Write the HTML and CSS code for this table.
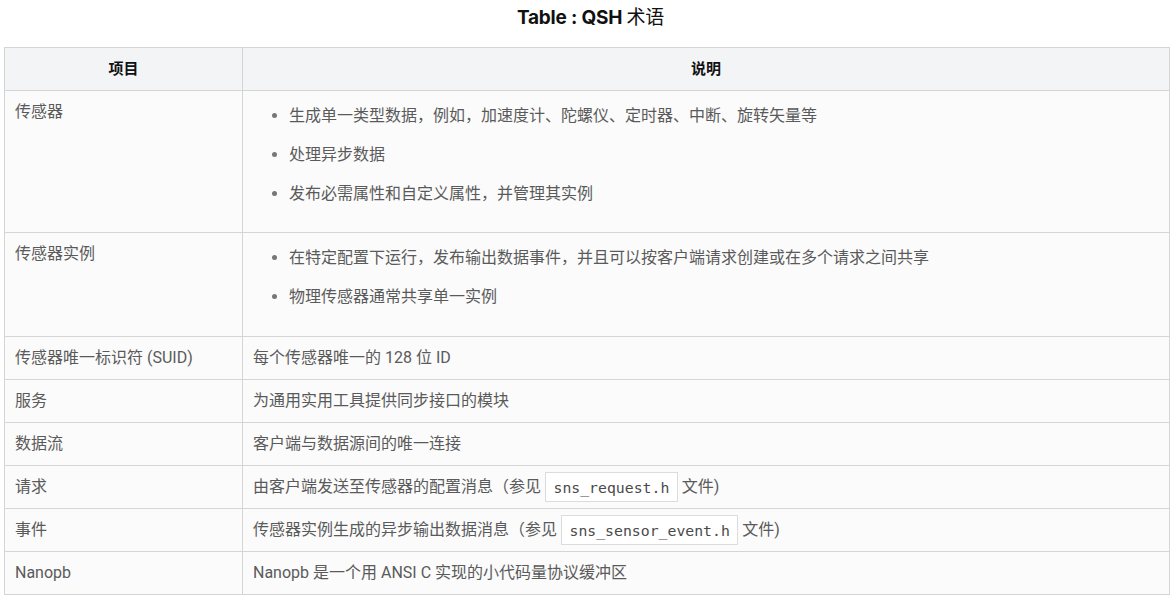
FILE: index.html
```html
<!DOCTYPE html>
<html lang="zh">
<head>
<meta charset="utf-8">
<title>Table : QSH 术语</title>
<link rel="stylesheet" href="styles.css">
</head>
<body>
<div class="title">Table : QSH <span class="title-cjk">术语</span></div>
<table class="terms">
  <colgroup><col class="c1"><col class="c2"></colgroup>
  <thead>
    <tr><th>项目</th><th>说明</th></tr>
  </thead>
  <tbody>
    <tr>
      <td>传感器</td>
      <td>
        <ul class="list">
          <li>生成单一类型数据，例如，加速度计、陀螺仪、定时器、中断、旋转矢量等</li>
          <li>处理异步数据</li>
          <li>发布必需属性和自定义属性，并管理其实例</li>
        </ul>
      </td>
    </tr>
    <tr>
      <td>传感器实例</td>
      <td>
        <ul class="list list-short">
          <li>在特定配置下运行，发布输出数据事件，并且可以按客户端请求创建或在多个请求之间共享</li>
          <li>物理传感器通常共享单一实例</li>
        </ul>
      </td>
    </tr>
    <tr><td>传感器唯一标识符 (SUID)</td><td>每个传感器唯一的 128 位 ID</td></tr>
    <tr><td>服务</td><td>为通用实用工具提供同步接口的模块</td></tr>
    <tr><td>数据流</td><td>客户端与数据源间的唯一连接</td></tr>
    <tr><td>请求</td><td>由客户端发送至传感器的配置消息（参见 <code class="chip">sns_request.h</code> 文件)</td></tr>
    <tr><td>事件</td><td>传感器实例生成的异步输出数据消息（参见 <code class="chip">sns_sensor_event.h</code> 文件)</td></tr>
    <tr><td>Nanopb</td><td>Nanopb 是一个用 ANSI C 实现的小代码量协议缓冲区</td></tr>
  </tbody>
</table>
</body>
</html>
```
FILE: styles.css
```css
html, body {
  margin: 0;
  padding: 0;
  background: #ffffff;
}

body {
  font-family: "Roboto", "Noto Sans CJK SC", sans-serif;
  color: #5a5a5a;
}

.title {
  text-align: center;
  font-family: "Inter", "Noto Sans CJK SC", sans-serif;
  font-weight: 700;
  font-size: 19px;
  line-height: 24px;
  color: #111111;
  padding: 6px 0 17px 8px;
  letter-spacing: -0.2px;
}

.title-cjk {
  font-weight: 400;
}

.terms {
  border-collapse: collapse;
  width: 1166px;
  margin-left: 4px;
  table-layout: fixed;
  background: #fbfbfb;
  font-size: 16px;
  line-height: 22px;
}

.terms .c1 { width: 238px; }

.terms th,
.terms td {
  border: 1px solid #d5d5d5;
  padding: 10px 10px;
  vertical-align: top;
  text-align: left;
}

.terms th {
  background: #f3f4f6;
  color: #111111;
  font-weight: 700;
  font-size: 15px;
  text-align: center;
}

.list {
  margin: 4px 0 17px;
  padding-left: 36px;
}

.list-short {
  margin-bottom: 18px;
}

.list li {
  height: 22px;
}

.list li + li {
  margin-top: 17px;
}

.list li::marker {
  color: #777777;
}

.chip {
  font-family: "DejaVu Sans Mono", "Liberation Mono", monospace;
  font-size: 14.8px;
  color: #4a4a4a;
  background: #ffffff;
  border: 1px solid #dcdcdc;
  padding: 5.5px 7.5px;
}
```
